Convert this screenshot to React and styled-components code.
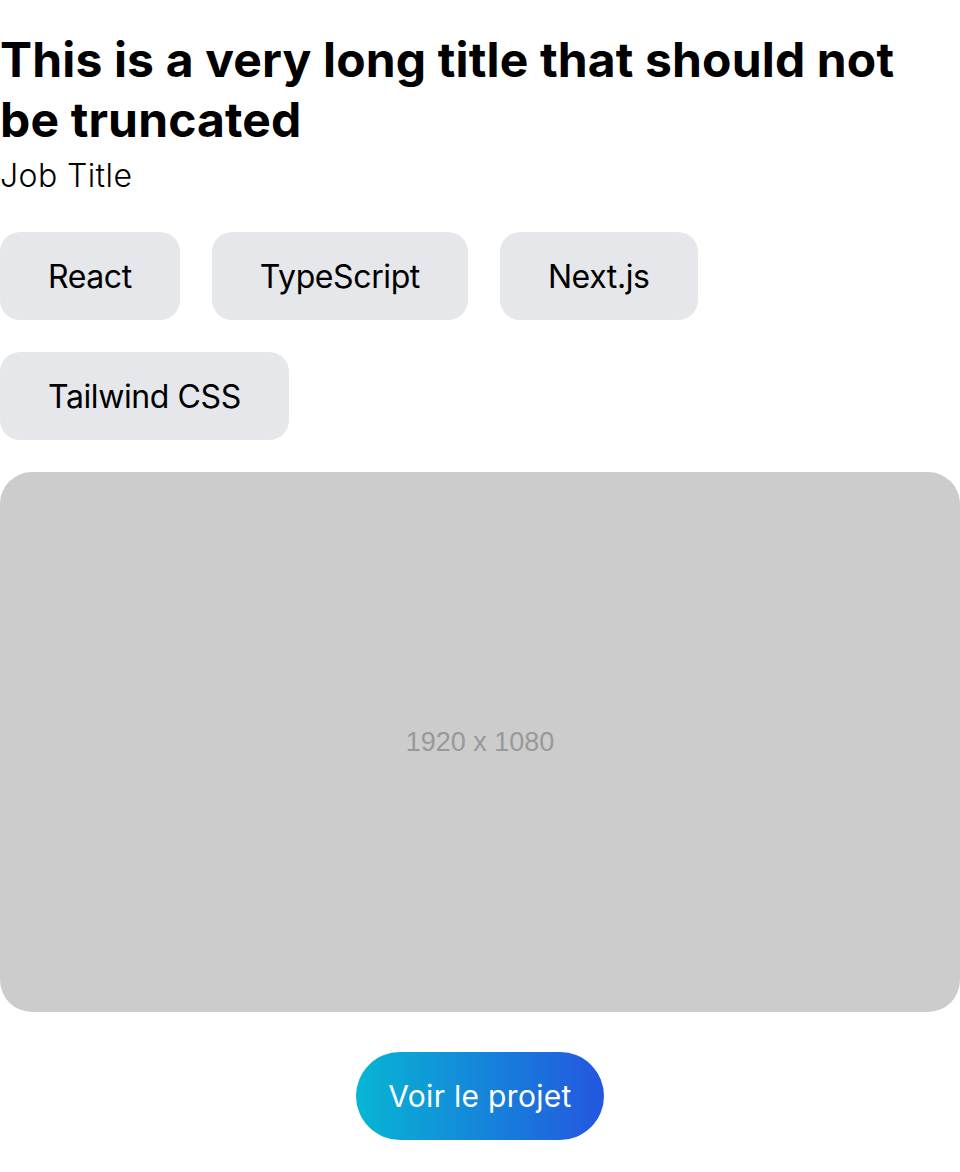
import React from "react"
import styled, { createGlobalStyle } from "styled-components"

const GlobalStyle = createGlobalStyle`
  body {
    margin: 0;
    background: #fff;
    font-family: Inter, "Noto Sans", sans-serif;
    color: #000;
  }
`

const Card = styled.section`
  display: flex;
  flex-direction: column;
  padding-top: 30px;
`

const Title = styled.h1`
  margin: 0;
  max-width: 930px;
  font-size: 48px;
  line-height: 60px;
  font-weight: 700;
  letter-spacing: 0.15px;
`

const Subtitle = styled.p`
  margin: 6px 0 0;
  font-size: 32px;
  line-height: 40px;
  font-weight: 300;
  letter-spacing: 0.4px;
`

const Tags = styled.div`
  display: flex;
  flex-wrap: wrap;
  gap: 32px;
  margin-top: 36px;
  max-width: 720px;
`

const Tag = styled.span`
  display: inline-flex;
  align-items: center;
  height: 88px;
  padding: 0 48px;
  border-radius: 20px;
  background: #e5e7eb;
  font-size: 32px;
  font-weight: 400;
  letter-spacing: -0.4px;
`

const Placeholder = styled.div`
  margin-top: 32px;
  height: 540px;
  border-radius: 32px;
  background: #cccccc;
  display: flex;
  align-items: center;
  justify-content: center;
  color: #999999;
  font-family: "Liberation Sans", Arial, sans-serif;
  font-size: 27px;
`

const Footer = styled.div`
  display: flex;
  justify-content: center;
  margin-top: 40px;
`

const Button = styled.a`
  display: inline-flex;
  align-items: center;
  height: 88px;
  padding: 0 32px;
  border-radius: 9999px;
  background: linear-gradient(to right, #06b6d4, #2456e0);
  color: #fff;
  font-size: 30px;
  letter-spacing: 0.3px;
  text-decoration: none;
`

const tags = ["React", "TypeScript", "Next.js", "Tailwind CSS"]

const App = () => {
  return (
    <>
      <GlobalStyle />
      <Card>
        <Title>This is a very long title that should not be truncated</Title>
        <Subtitle>Job Title</Subtitle>
        <Tags>
          {tags.map(tag => (
            <Tag key={tag}>{tag}</Tag>
          ))}
        </Tags>
        <Placeholder>1920 x 1080</Placeholder>
        <Footer>
          <Button href="#">Voir le projet</Button>
        </Footer>
      </Card>
    </>
  )
}

export default App
